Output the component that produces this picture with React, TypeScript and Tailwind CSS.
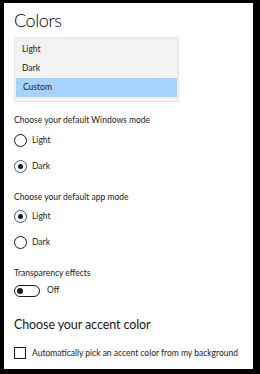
import React, { useState } from "react";

const font = { fontFamily: 'Lato, "Noto Sans", sans-serif' };

const Radio = ({ label, checked }: { label: string; checked: boolean }) => {
  return (
    <div className="flex items-center h-[13px]">
      <span
        className={`w-[13px] h-[13px] rounded-full border-[1.5px] flex items-center justify-center ${
          checked ? "border-[#2b5f8f]" : "border-[#1a1a1a]"
        }`}
      >
        {checked && <span className="w-[5px] h-[5px] rounded-full bg-[#1a1a1a]" />}
      </span>
      <span className="ml-[5px] text-[8.5px] text-[#222] leading-none">{label}</span>
    </div>
  );
};

const App = () => {
  const [mode] = useState("Custom");
  const options = ["Light", "Dark", "Custom"];

  return (
    <div className="w-[260px] h-[374px] bg-black pt-[3px] pl-[4px] pr-[7px] pb-[5px]" style={font}>
      <div className="w-full h-full bg-white pl-[10px] pt-[6px]">
        <h1 className="text-[18px] font-light text-black leading-none h-[24px] pt-[2px] tracking-[-0.4px]">
          Colors
        </h1>

        {/* dropdown list */}
        <div className="mt-[4px] w-[165px] h-[65px] bg-[#f2f2f2] border border-[#e6e6e6] pt-[2px]">
          {options.map((o) => (
            <div
              key={o}
              className={`h-[19px] flex items-center pl-[7px] text-[8.5px] text-[#222] ${
                o === mode ? "bg-[#a6d3fb] mx-[1px] pl-[6px]" : ""
              }`}
            >
              {o}
            </div>
          ))}
        </div>

        <p className="mt-[14px] text-[8.5px] text-[#222] leading-none">Choose your default Windows mode</p>
        <div className="mt-[9px] flex flex-col gap-[13px]">
          <Radio label="Light" checked={false} />
          <Radio label="Dark" checked={true} />
        </div>

        <p className="mt-[20px] text-[8.5px] text-[#222] leading-none">Choose your default app mode</p>
        <div className="mt-[9px] flex flex-col gap-[13px]">
          <Radio label="Light" checked={true} />
          <Radio label="Dark" checked={false} />
        </div>

        <p className="mt-[20px] text-[8.5px] text-[#222] leading-none">Transparency effects</p>
        <div className="mt-[7px] flex items-center">
          <span className="w-[26px] h-[12px] rounded-full border-[1.5px] border-[#1a1a1a] flex items-center pl-[2px]">
            <span className="w-[6px] h-[6px] rounded-full bg-[#1a1a1a]" />
          </span>
          <span className="ml-[7px] text-[8.5px] text-[#222] leading-none">Off</span>
        </div>

        <h2 className="mt-[22px] text-[12.5px] font-normal text-[#1a1a1a] leading-none tracking-[-0.1px]">
          Choose your accent color
        </h2>
        <div className="mt-[16px] flex items-center">
          <span className="w-[12px] h-[12px] border-[1.5px] border-[#1a1a1a]" />
          <span className="ml-[6px] text-[8.5px] text-[#222] leading-none whitespace-nowrap">
            Automatically pick an accent color from my background
          </span>
        </div>
      </div>
    </div>
  );
};

export default App;
